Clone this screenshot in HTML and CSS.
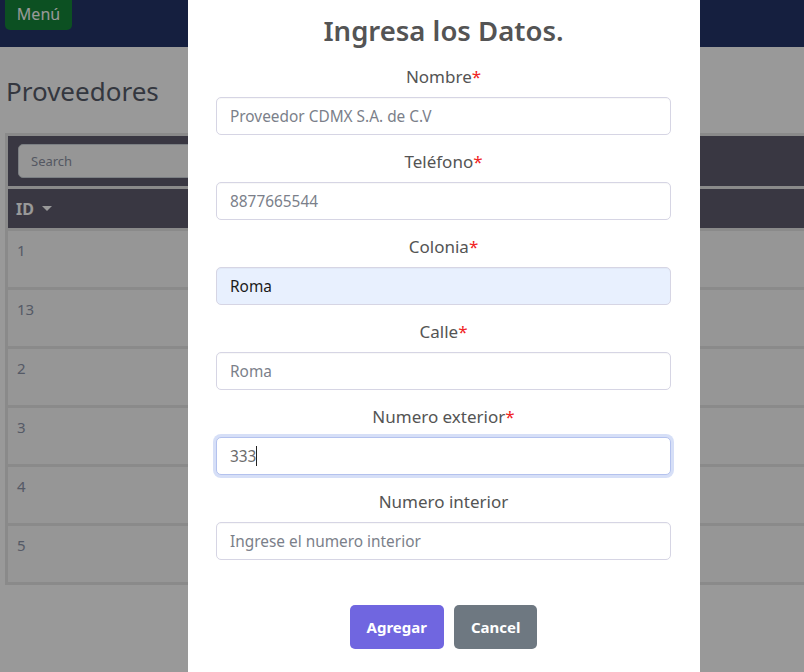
FILE: index.html
```html
<!DOCTYPE html>
<html lang="es">
<head>
<meta charset="utf-8">
<title>Proveedores</title>
<link rel="stylesheet" href="styles.css">
</head>
<body>
<div class="page">
  <nav class="navbar">
    <button class="btn-menu">Menú</button>
  </nav>
  <h1 class="page-title">Proveedores</h1>
  <div class="table">
    <div class="search-row">
      <div class="search-input">Search</div>
    </div>
    <div class="head-row"><span class="th">ID <span class="caret"></span></span></div>
    <div class="row"><span class="cell">1</span></div>
    <div class="row"><span class="cell">13</span></div>
    <div class="row"><span class="cell">2</span></div>
    <div class="row"><span class="cell">3</span></div>
    <div class="row"><span class="cell">4</span></div>
    <div class="row"><span class="cell">5</span></div>
  </div>
</div>

<div class="backdrop"></div>

<div class="modal">
  <h2 class="modal-title">Ingresa los Datos.</h2>
  <form class="form">
    <div class="field">
      <label class="label">Nombre<span class="req">*</span></label>
      <div class="input placeholder">Proveedor CDMX S.A. de C.V</div>
    </div>
    <div class="field">
      <label class="label">Teléfono<span class="req">*</span></label>
      <div class="input placeholder">8877665544</div>
    </div>
    <div class="field">
      <label class="label">Colonia<span class="req">*</span></label>
      <div class="input autofill">Roma</div>
    </div>
    <div class="field">
      <label class="label">Calle<span class="req">*</span></label>
      <div class="input placeholder">Roma</div>
    </div>
    <div class="field">
      <label class="label">Numero exterior<span class="req">*</span></label>
      <div class="input focus">333<span class="cursor"></span></div>
    </div>
    <div class="field">
      <label class="label">Numero interior</label>
      <div class="input placeholder">Ingrese el numero interior</div>
    </div>
  </form>
  <div class="actions">
    <button class="btn btn-confirm">Agregar</button>
    <button class="btn btn-cancel">Cancel</button>
  </div>
</div>
</body>
</html>
```

FILE: styles.css
```css
* { box-sizing: border-box; }
html, body {
  margin: 0;
  padding: 0;
  width: 804px;
  height: 672px;
  overflow: hidden;
  background: #ffffff;
  font-family: "Noto Sans", "Open Sans", sans-serif;
}
.page {
  width: 804px;
  height: 672px;
  overflow: hidden;
}
.navbar {
  height: 47px;
  background: rgb(35, 52, 105);
  padding: 0 5px;
  display: flex;
  align-items: flex-start;
  overflow: hidden;
}
.btn-menu {
  display: block;
  width: 67px;
  height: 38px;
  margin-top: -8px;
  padding: 6px 0 0;
  border: none;
  border-radius: 5px;
  background: rgb(20, 134, 57);
  color: #ffffff;
  font-family: inherit;
  font-size: 16px;
  line-height: 22px;
}
.page-title {
  margin: 0;
  padding: 24px 6px 0;
  height: 86px;
  font-size: 26px;
  font-weight: 400;
  line-height: 40px;
  color: #575d6a;
}
.table {
  margin-left: 5px;
  width: 1000px;
  border: 3px solid #e6e6e6;
  background: #e6e6e6;
  display: flex;
  flex-direction: column;
  gap: 3px;
}
.search-row {
  height: 50px;
  background: #5f5d6e;
  padding: 8px 10px;
}
.search-input {
  width: 320px;
  height: 34px;
  border: 1px solid #ced4da;
  border-radius: 5px;
  background: #fafafa;
  padding: 0 12px;
  font-size: 13px;
  line-height: 32px;
  color: #8c92a3;
}
.head-row {
  height: 39px;
  background: #5f5d6e;
  padding: 0 8px;
  display: flex;
  align-items: center;
}
.th {
  color: #ffffff;
  font-weight: 700;
  font-size: 16px;
  display: flex;
  align-items: center;
  gap: 6px;
}
.caret {
  width: 0;
  height: 0;
  border-left: 5px solid transparent;
  border-right: 5px solid transparent;
  border-top: 5px solid #ffffff;
  margin-left: 2px;
}
.row {
  height: 56px;
  background: #fafafa;
  padding: 8px 9px 0;
}
.cell {
  font-size: 15px;
  line-height: 20px;
  color: #8e96aa;
}
.backdrop {
  position: fixed;
  inset: 0;
  background: rgba(0, 0, 0, 0.4);
}
.modal {
  position: absolute;
  left: 188px;
  top: 0;
  width: 512px;
  height: 690px;
  background: #ffffff;
  padding: 11px 29px 0 28px;
  display: flex;
  flex-direction: column;
  align-items: stretch;
  color: #545454;
}
.modal-title {
  margin: 0;
  text-align: center;
  font-size: 27.5px;
  font-weight: 600;
  line-height: 40px;
  color: #545454;
}
.form {
  margin-top: 14px;
  display: flex;
  flex-direction: column;
  gap: 15px;
}
.field {
  display: flex;
  flex-direction: column;
  gap: 8px;
}
.label {
  display: block;
  text-align: center;
  font-size: 17px;
  line-height: 24px;
  color: #545454;
}
.req { color: #f02424; }
.input {
  height: 38px;
  border: 1px solid #d6d5e4;
  border-radius: 5px;
  background: #ffffff;
  padding: 1px 13px 0;
  font-size: 15.4px;
  line-height: 36px;
  color: #545454;
  box-shadow: inset 0 1px 1px rgba(0, 0, 0, 0.03);
}
.input.placeholder { color: #7b7f8a; }
.input.autofill { background: #e8f0fe; color: #1a1a1a; }
.input.focus {
  border-color: #b4c2ee;
  box-shadow: 0 0 0 3px rgba(180, 196, 240, 0.55);
  color: #6b6b6b;
}
.cursor {
  display: inline-block;
  width: 1px;
  height: 20px;
  background: #222;
  vertical-align: middle;
  margin-top: -3px;
}
.actions {
  margin-top: 45px;
  display: flex;
  justify-content: center;
  gap: 10px;
}
.btn {
  border: none;
  border-radius: 5px;
  height: 44px;
  padding: 0 17px;
  font-family: inherit;
  font-size: 15px;
  font-weight: 700;
  color: #ffffff;
}
.btn-confirm { background: #7066e0; }
.btn-cancel { background: #6e7881; }
```
